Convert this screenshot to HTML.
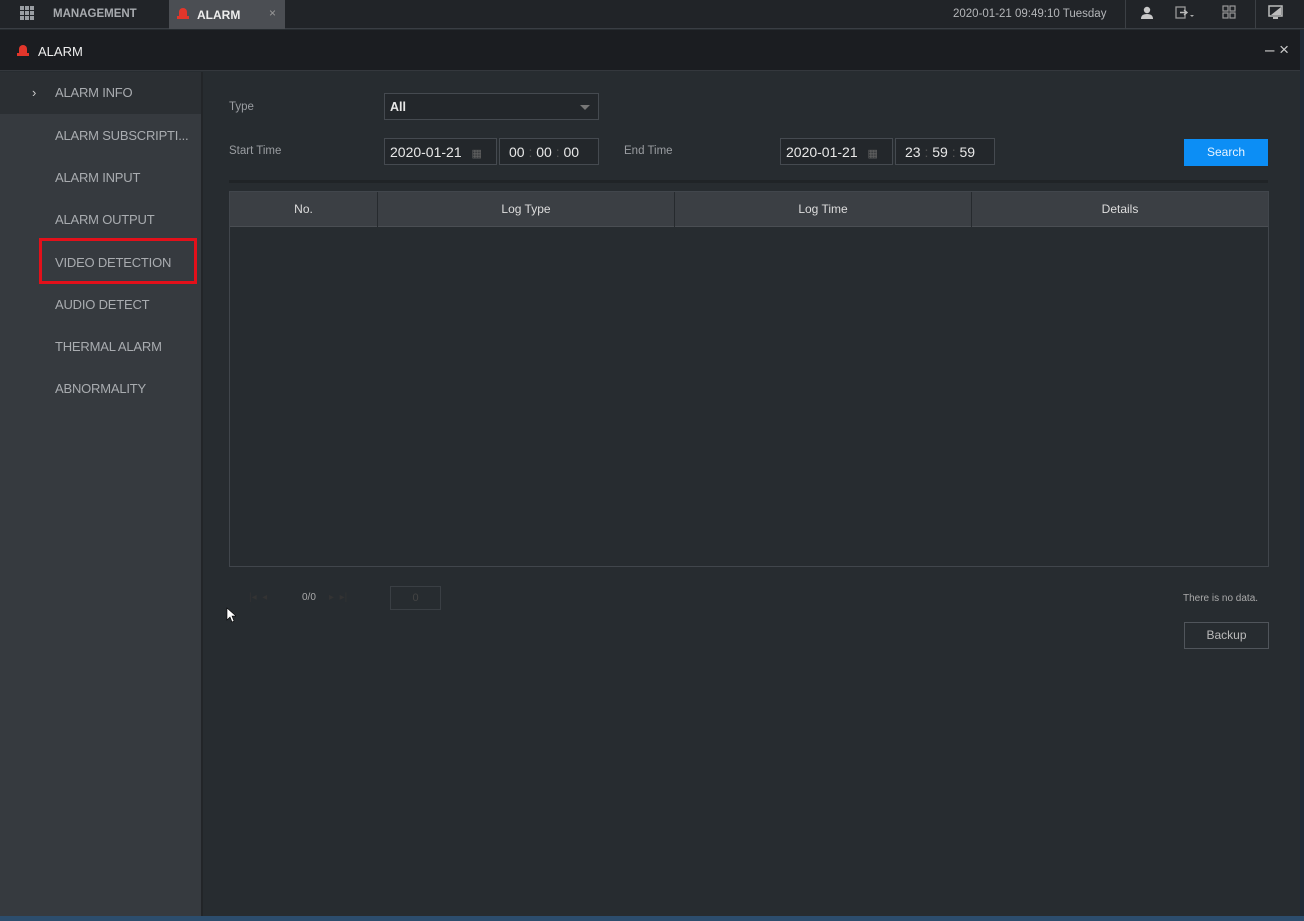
<!DOCTYPE html>
<html><head><meta charset="utf-8"><style>
*{margin:0;padding:0;box-sizing:border-box}
body{width:1304px;height:921px;overflow:hidden;background:#272c30;font-family:"Liberation Sans",sans-serif;position:relative;color:#ccc}
.abs{position:absolute}
#top{left:0;top:0;width:1304px;height:29px;background:#212428;border-bottom:1px solid #3a3e44}
#title{left:0;top:30px;width:1304px;height:41px;background:#1b1d21;border-bottom:1px solid #34383d}
#side{left:0;top:72px;width:203px;height:844px;background:#363a3f;border-right:2px solid #222528}
.si{position:absolute;left:55px;font-size:13px;color:#a9acb0;letter-spacing:-0.2px}
.lbl{font-size:11.5px;color:#9a9da1;position:absolute}
.box{position:absolute;border:1px solid #454a50;background:#23272b;color:#e8e8e8}
.th{position:absolute;top:0;height:35px;line-height:35px;text-align:center;font-size:12px;color:#ddd;border-right:1px solid #262a2e}
</style></head><body>
<div id="top" class="abs">
 <svg class="abs" style="left:20px;top:6px" width="14" height="14"><g fill="#9a9ea3"><rect x="0" y="0" width="4" height="4"/><rect x="5" y="0" width="4" height="4"/><rect x="10" y="0" width="4" height="4"/><rect x="0" y="5" width="4" height="4"/><rect x="5" y="5" width="4" height="4"/><rect x="10" y="5" width="4" height="4"/><rect x="0" y="10" width="4" height="4"/><rect x="5" y="10" width="4" height="4"/><rect x="10" y="10" width="4" height="4"/></g></svg>
 <div class="abs" style="left:53px;top:8px;font-size:11.5px;font-weight:bold;color:#a8abaf">MANAGEMENT</div>
 <div class="abs" style="left:169px;top:0;width:116px;height:29px;background:#4b4e53"></div>
 <svg class="abs" style="left:177px;top:6px" width="12" height="14"><path d="M2 10 V6 a4 4 0 0 1 8 0 V10 Z" fill="#e2362b"/><rect x="0" y="10" width="12" height="3" fill="#e2362b"/></svg>
 <div class="abs" style="left:197px;top:8px;font-size:12px;font-weight:bold;color:#eee">ALARM</div>
 <div class="abs" style="left:269px;top:6px;font-size:12px;color:#999">×</div>
 <div class="abs" style="left:953px;top:8px;font-size:11.5px;color:#b4b6b9">2020-01-21 09:49:10 Tuesday</div>
 <div class="abs" style="left:1125px;top:0;width:1px;height:29px;background:#3c4045"></div>
 <svg class="abs" style="left:1141px;top:6px" width="12" height="14"><circle cx="6" cy="4" r="3.2" fill="#c8c8c8"/><path d="M0 13 Q0 8 6 8 Q12 8 12 13Z" fill="#c8c8c8"/></svg>
 <svg class="abs" style="left:1175px;top:6px" width="22" height="14"><rect x="1" y="1" width="9" height="11" fill="none" stroke="#999" stroke-width="1.3"/><path d="M5 6.5h6M9 4l3 2.5-3 2.5" stroke="#bbb" fill="none" stroke-width="1.4"/><path d="M15 9h4l-2 2z" fill="#aaa"/></svg>
 <svg class="abs" style="left:1222px;top:5px" width="14" height="14"><g fill="none" stroke="#999" stroke-width="1.2"><rect x="1" y="1" width="5" height="5"/><rect x="8" y="1" width="5" height="5"/><rect x="1" y="8" width="5" height="5"/><rect x="8" y="8" width="5" height="5"/></g></svg>
 <div class="abs" style="left:1255px;top:0;width:1px;height:29px;background:#3c4045"></div>
 <svg class="abs" style="left:1268px;top:5px" width="16" height="16"><rect x="1" y="1" width="13" height="10" fill="none" stroke="#bbb" stroke-width="1.5"/><path d="M3 10 L13 2 V10Z" fill="#bbb"/><rect x="5" y="12" width="5" height="2" fill="#bbb"/></svg>
</div>
<div id="title" class="abs">
 <svg class="abs" style="left:17px;top:13px" width="12" height="14"><path d="M2 10 V6 a4 4 0 0 1 8 0 V10 Z" fill="#e2362b"/><rect x="0" y="10" width="12" height="3" fill="#e2362b"/></svg>
 <div class="abs" style="left:38px;top:14px;font-size:13px;color:#eee">ALARM</div>
 <div class="abs" style="left:1265px;top:10px;font-size:17px;color:#ccc">– ×</div>
</div>
<div class="abs" style="left:1300px;top:30px;width:4px;height:891px;background:#1f2a36"></div>
<div class="abs" style="left:0;top:916px;width:1304px;height:5px;background:#2c4d6d"></div>
<div id="side" class="abs">
 <div class="abs" style="left:0;top:0;width:201px;height:42px;background:#2b2f33"></div>
 <div class="si" style="left:32px;top:13px;color:#ccc">›</div>
 <div class="si" style="top:13px">ALARM INFO</div>
 <div class="si" style="top:56px">ALARM SUBSCRIPTI...</div>
 <div class="si" style="top:98px">ALARM INPUT</div>
 <div class="si" style="top:140px">ALARM OUTPUT</div>
 <div class="abs" style="left:39px;top:166px;width:158px;height:46px;border:3px solid #e3101a"></div>
 <div class="si" style="top:183px">VIDEO DETECTION</div>
 <div class="si" style="top:225px">AUDIO DETECT</div>
 <div class="si" style="top:267px">THERMAL ALARM</div>
 <div class="si" style="top:309px">ABNORMALITY</div>
</div>
<div class="lbl" style="left:229px;top:101px">Type</div>
<div class="box" style="left:384px;top:93px;width:215px;height:27px;font-weight:bold;font-size:12.5px;padding:6px 5px">All<span style="position:absolute;right:8px;top:11px;border:5px solid transparent;border-top:5px solid #777;border-bottom:0"></span></div>
<div class="lbl" style="left:229px;top:145px">Start Time</div>
<div class="box" style="left:384px;top:138px;width:113px;height:27px;font-size:14px;padding:5px 5px">2020-01-21 <span style="color:#666;font-size:11px;margin-left:6px">▦</span></div>
<div class="box" style="left:499px;top:138px;width:100px;height:27px;font-size:14px;padding:5px 9px">00 <span style="color:#555">:</span> 00 <span style="color:#555">:</span> 00</div>
<div class="lbl" style="left:624px;top:145px">End Time</div>
<div class="box" style="left:780px;top:138px;width:113px;height:27px;font-size:14px;padding:5px 5px">2020-01-21 <span style="color:#666;font-size:11px;margin-left:6px">▦</span></div>
<div class="box" style="left:895px;top:138px;width:100px;height:27px;font-size:14px;padding:5px 9px">23 <span style="color:#555">:</span> 59 <span style="color:#555">:</span> 59</div>
<div class="abs" style="left:1184px;top:139px;width:84px;height:27px;background:#0c8ef5;color:#e8f4ff;font-size:12px;text-align:center;line-height:27px">Search</div>
<div class="abs" style="left:229px;top:180px;width:1039px;height:3px;background:#202427"></div>
<div class="abs" style="left:229px;top:191px;width:1040px;height:376px;border:1px solid #41464c;background:#272c30">
 <div class="abs" style="left:0;top:0;width:1038px;height:35px;background:#3b3f44;border-bottom:1px solid #4a4e53">
  <div class="th" style="left:0;width:148px">No.</div>
  <div class="th" style="left:148px;width:297px">Log Type</div>
  <div class="th" style="left:445px;width:297px">Log Time</div>
  <div class="th" style="left:742px;width:296px;border:0">Details</div>
 </div>
</div>
<div class="abs" style="left:302px;top:592px;font-size:10px;color:#aaa">0/0</div>
<div class="abs" style="left:249px;top:592px;font-size:10px;color:#333">|◂ &nbsp;◂</div>
<div class="abs" style="left:329px;top:592px;font-size:10px;color:#333">▸ &nbsp;▸|</div>
<div class="abs" style="left:390px;top:586px;width:51px;height:24px;border:1px solid #3a3f44;font-size:11px;color:#444;text-align:center;line-height:22px">0</div>
<svg class="abs" style="left:226px;top:607px" width="10" height="16"><path d="M1 1 V13 L4 10 L6 15 L8 14 L6 9 L10 9 Z" fill="#fff" stroke="#000" stroke-width=".6"/></svg>
<div class="abs" style="left:1183px;top:593px;font-size:10px;color:#aaa">There is no data.</div>
<div class="abs" style="left:1184px;top:622px;width:85px;height:27px;border:1px solid #50555b;font-size:12px;color:#bbb;text-align:center;line-height:25px">Backup</div>
</body></html>
